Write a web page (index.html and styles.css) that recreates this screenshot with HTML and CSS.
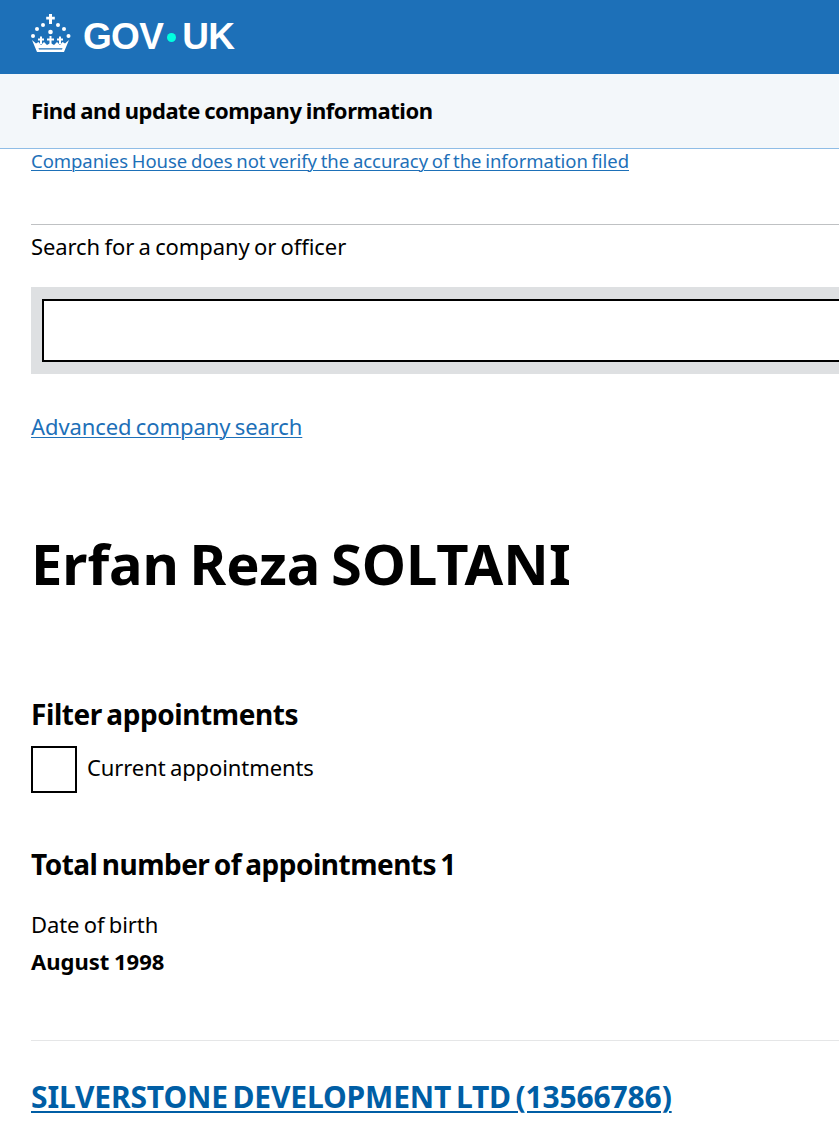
FILE: index.html
```html
<!DOCTYPE html>
<html lang="en">
<head>
<meta charset="utf-8">
<title>Erfan Reza SOLTANI - Find and update company information</title>
<link rel="stylesheet" href="styles.css">
</head>
<body>
<header class="gov-header">
  <a class="logo" href="#">
    <svg class="crown" viewBox="0 0 40 38" width="40" height="38" aria-hidden="true">
      <g fill="#fff">
        <path d="M18 0h3v2.700h2.800v2.800H21v4.500h-3V5.500h-2.800V2.700H18z"/>
        <circle cx="12" cy="11" r="2"/><circle cx="27" cy="11" r="2"/>
        <circle cx="6" cy="15" r="2"/><circle cx="33" cy="15" r="2"/>
        <circle cx="2" cy="22" r="2"/><circle cx="37.500" cy="22" r="2"/>
        <circle cx="19.500" cy="18" r="2.300"/>
        <path d="M9 22.500h2v2h2v2h-2v3.500H9v-3.500H7v-2h2zM18.500 22h2v2.500h2.500v2h-2.500v3.500h-2v-3.500H16v-2h2.500zM28 22.500h2v2h2v2h-2v3.500h-2v-3.500h-2v-2h2z"/>
        <path fill-rule="evenodd" d="M1 26l4 3.500 2.500-1.500 2.500 3 3-3 3 3 3.500-2 3.500 2 3-3 3 3 2.500-3 2.500 1.500 4-3.500-5 12H6zM7.500 34.200l.5 1.300h23l.5-1.300z"/>
      </g>
    </svg>
    <span class="wordmark">GOV<span class="dot"></span>UK</span>
  </a>
</header>
<div class="service-bar">
  <span class="service-name">Find and update company information</span>
</div>
<main class="page">
  <p class="notice"><a class="link" href="#">Companies House does not verify the accuracy of the information filed</a></p>
  <hr class="rule">
  <label class="search-label" for="q">Search for a company or officer</label>
  <div class="search-band"><input class="search-input" id="q" type="text"></div>
  <p class="advanced"><a class="link" href="#">Advanced company search</a></p>
  <h1 class="officer-name">Erfan Reza SOLTANI</h1>
  <h2 class="heading filter-heading">Filter appointments</h2>
  <div class="check-row">
    <span class="check-box"></span>
    <span class="check-label">Current appointments</span>
  </div>
  <h2 class="heading total-heading">Total number of appointments 1</h2>
  <dl class="dob">
    <dt class="dob-label">Date of birth</dt>
    <dd class="dob-value">August 1998</dd>
  </dl>
  <hr class="rule rule-light">
  <h2 class="company"><a class="company-link" href="#">SILVERSTONE DEVELOPMENT LTD (13566786)</a></h2>
</main>
</body>
</html>
```
FILE: styles.css
```css
html, body { margin: 0; padding: 0; }
body {
  font-family: "Noto Sans", "Liberation Sans", sans-serif;
  color: #0b0c0c;
  background: #fff;
  overflow-x: hidden;
}
.gov-header {
  height: 74px;
  background: #1d70b8;
  display: flex;
  align-items: center;
  padding-left: 31px;
}
.logo { display: flex; align-items: center; gap: 12px; text-decoration: none; color: #fff; }
.crown { display: block; margin-top: -8px; }
.wordmark { display: flex; align-items: center; font-family: "Liberation Sans", sans-serif; font-weight: 700; font-size: 37px; line-height: 40px; letter-spacing: -0.7px; }
.dot { display: block; width: 9px; height: 9px; border-radius: 50%; background: #00ffe0; margin: 0 6px 0 4px; }
.service-bar {
  height: 74px;
  background: #f3f7fa;
  border-bottom: 1px solid #8fbde6;
  display: flex;
  align-items: center;
  padding-left: 31px;
}
.service-name { font-weight: 700; font-size: 22px; line-height: 30px; color: #000; letter-spacing: -0.45px; word-spacing: -1px; margin-top: -2px; }
.page { padding-left: 31px; }
.notice { margin: -1px 0 0; height: 76px; font-size: 18.5px; line-height: 25px; letter-spacing: -0.05px; word-spacing: -1px; }
.link { color: #1d70b8; text-decoration: underline; text-underline-offset: 2px; text-decoration-thickness: 1px; }
.rule { margin: 0; border: 0; border-top: 1px solid #bfc1c3; }
.search-label { display: block; font-size: 22px; line-height: 30px; margin-top: 6px; color: #000; letter-spacing: -0.09px; word-spacing: -1.26px; }
.search-band { margin-top: 26px; height: 87px; background: #dee0e2; padding: 12px 0 12px 11px; box-sizing: border-box; }
.search-input { display: block; box-sizing: border-box; width: 100%; height: 63px; border: 2px solid #000; border-right: 0; background: #fff; padding: 0; outline: 0; }
.advanced { margin: 37px 0 0; font-size: 22px; line-height: 30px; letter-spacing: -0.09px; word-spacing: -1.26px; }
.officer-name { margin: 87px 0 0; font-size: 56px; line-height: 70px; font-weight: 700; color: #000; word-spacing: -4px; }
.heading { margin: 0; font-size: 28px; line-height: 34px; font-weight: 700; color: #000; letter-spacing: -0.42px; word-spacing: -2.500px; }
.total-heading { letter-spacing: -0.5px; }
.filter-heading { margin-top: 99px; }
.check-row { display: flex; align-items: center; gap: 10px; margin-top: 15px; }
.check-box { display: block; width: 46px; height: 47px; box-sizing: border-box; border: 2px solid #000; background: #fff; }
.check-label { font-size: 22px; line-height: 30px; color: #000; letter-spacing: -0.09px; word-spacing: -1.26px; margin-top: -5px; }
.total-heading { margin-top: 54px; }
.dob { margin: 0; }
.dob-label { margin-top: 25px; font-size: 22px; line-height: 36px; color: #000; letter-spacing: -0.09px; word-spacing: -1.26px; }
.dob-value { margin: 1px 0 0; font-size: 22px; line-height: 36px; font-weight: 700; color: #000; word-spacing: -1px; }
.rule-light { margin-top: 61px; border-top-color: #e5e6e7; }
.company { margin: 38px 0 0; font-size: 30px; line-height: 36px; font-weight: 700; letter-spacing: -0.15px; word-spacing: -3px; }
.company-link { color: #005ea5; text-decoration: underline; text-decoration-thickness: 2px; text-underline-offset: 3px; }
```
